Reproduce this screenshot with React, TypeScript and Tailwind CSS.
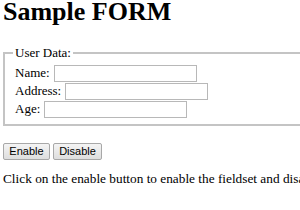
export default function App() {
  return (
    <div className="w-[300px] h-[210px] overflow-hidden bg-white text-black font-['Liberation_Serif',serif]">
      <div className="w-[420px] pl-[3px]">
        {/* Heading */}
        <h1 className="text-[26px] font-bold leading-[24px]">Sample FORM</h1>

        {/* Form fieldset */}
        <fieldset className="mt-[21px] border-2 border-[#c4c4c4] pl-[10px] pt-[4px] pb-[6px] text-[13px] w-[340px]">
          <legend className="-ml-[2px] px-[2px] leading-[15px]">User Data:</legend>
          <div className="flex items-center h-[18px] leading-[18px]">
            <span>Name:</span>
            <input type="text" className="ml-[4px] w-[143px] h-[17px] border border-[#b8b8b8] bg-white" />
          </div>
          <div className="flex items-center h-[18px] leading-[18px]">
            <span>Address:</span>
            <input type="text" className="ml-[4px] w-[143px] h-[17px] border border-[#b8b8b8] bg-white" />
          </div>
          <div className="flex items-center h-[18px] leading-[18px]">
            <span>Age:</span>
            <input type="text" className="ml-[4px] w-[143px] h-[17px] border border-[#b8b8b8] bg-white" />
          </div>
        </fieldset>

        {/* Buttons */}
        <div className="mt-[17px] flex gap-[3px] font-['Liberation_Sans',Arial,sans-serif] text-[11px]">
          <button className="w-[47px] h-[17px] border border-[#a8a8a8] rounded-[2px] bg-gradient-to-b from-[#f4f4f4] to-[#dedede] leading-[15px]">
            Enable
          </button>
          <button className="w-[49px] h-[17px] border border-[#a8a8a8] rounded-[2px] bg-gradient-to-b from-[#f4f4f4] to-[#dedede] leading-[15px]">
            Disable
          </button>
        </div>

        <p className="mt-[11px] text-[13.3px] leading-[15px] whitespace-nowrap">
          Click on the enable button to enable the fieldset and disable button to disable it.
        </p>
      </div>
    </div>
  );
}
